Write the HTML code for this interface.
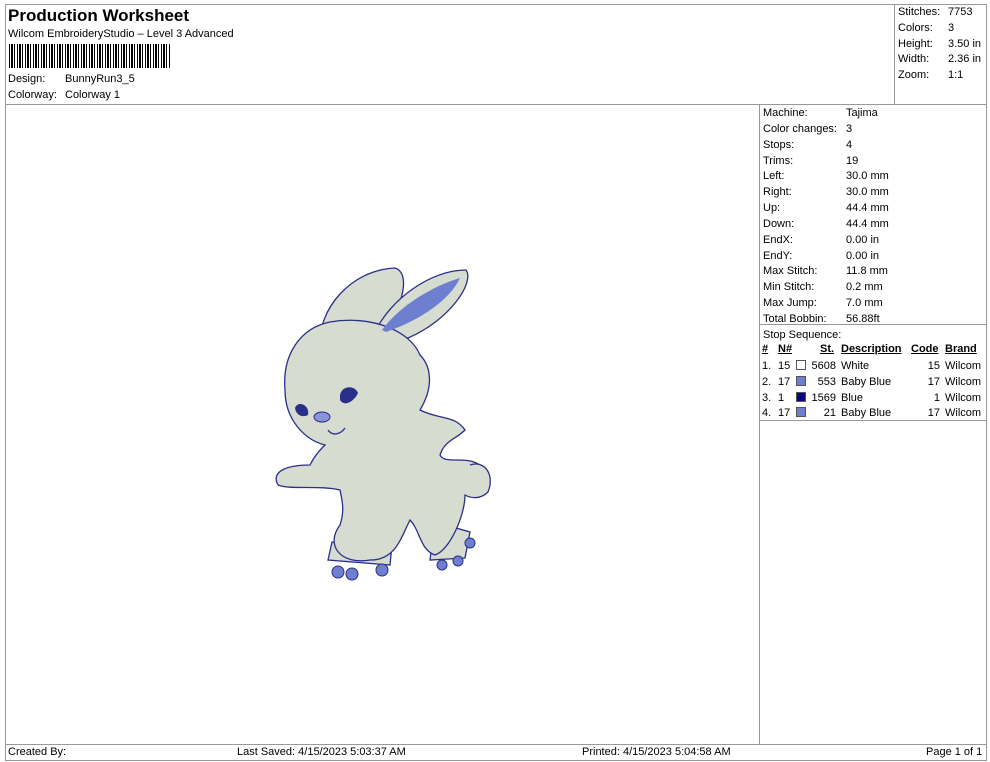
<!DOCTYPE html>
<html><head><meta charset="utf-8"><style>
*{margin:0;padding:0;box-sizing:border-box}
body{width:990px;height:762px;background:#fff;font-family:"Liberation Sans",Arial,sans-serif;font-size:11px;color:#000;position:relative;overflow:hidden}
.a{position:absolute;white-space:nowrap}
.l{position:absolute;background:#999}
u{text-decoration:underline}
.sw{display:inline-block;width:10px;height:10px;border:1px solid #555;vertical-align:-1px}
</style></head><body>
<div class="l" style="left:5px;top:4px;width:982px;height:1px"></div>
<div class="l" style="left:5px;top:760px;width:982px;height:1px"></div>
<div class="l" style="left:5px;top:4px;width:1px;height:757px"></div>
<div class="l" style="left:986px;top:4px;width:1px;height:757px"></div>
<div class="l" style="left:5px;top:104px;width:982px;height:1px"></div>
<div class="l" style="left:894px;top:4px;width:1px;height:100px"></div>
<div class="l" style="left:759px;top:104px;width:1px;height:640px"></div>
<div class="l" style="left:5px;top:744px;width:982px;height:1px"></div>
<div class="l" style="left:759px;top:324px;width:228px;height:1px"></div>
<div class="l" style="left:759px;top:420px;width:228px;height:1px"></div>

<div class="a" style="left:8px;top:6px;font-size:17px;font-weight:bold">Production Worksheet</div>
<div class="a" style="left:8px;top:28px">Wilcom EmbroideryStudio – Level 3 Advanced</div>
<div class="a" style="left:9px;top:44px;width:161px;height:24px;background:repeating-linear-gradient(90deg,#000 0 1px,#fff 1px 2px,#000 2px 4px,#fff 4px 5px,#000 5px 6px,#fff 6px 8px)"></div>
<div class="a" style="left:8px;top:73px">Design:</div><div class="a" style="left:65px;top:73px">BunnyRun3_5</div>
<div class="a" style="left:8px;top:89px">Colorway:</div><div class="a" style="left:65px;top:89px">Colorway 1</div>

<div class="a" style="left:898px;top:5px;line-height:15.8px">Stitches:<br>Colors:<br>Height:<br>Width:<br>Zoom:</div>
<div class="a" style="left:948px;top:5px;line-height:15.8px">7753<br>3<br>3.50 in<br>2.36 in<br>1:1</div>

<div class="a" style="left:763px;top:106px;line-height:15.85px">Machine:<br>Color changes:<br>Stops:<br>Trims:<br>Left:<br>Right:<br>Up:<br>Down:<br>EndX:<br>EndY:<br>Max Stitch:<br>Min Stitch:<br>Max Jump:<br>Total Bobbin:<br>Stop Sequence:</div>
<div class="a" style="left:846px;top:106px;line-height:15.85px">Tajima<br>3<br>4<br>19<br>30.0 mm<br>30.0 mm<br>44.4 mm<br>44.4 mm<br>0.00 in<br>0.00 in<br>11.8 mm<br>0.2 mm<br>7.0 mm<br>56.88ft</div>

<div class="a" style="left:762px;top:343px;font-weight:bold"><u>#</u></div>
<div class="a" style="left:778px;top:343px;font-weight:bold"><u>N#</u></div>
<div class="a" style="left:820px;top:343px;font-weight:bold"><u>St.</u></div>
<div class="a" style="left:841px;top:343px;font-weight:bold"><u>Description</u></div>
<div class="a" style="left:911px;top:343px;font-weight:bold"><u>Code</u></div>
<div class="a" style="left:945px;top:343px;font-weight:bold"><u>Brand</u></div>
<div class="a" style="left:762px;top:359px;line-height:15.8px">1.<br>2.<br>3.<br>4.</div>
<div class="a" style="left:778px;top:359px;line-height:15.8px">15<br>17<br>1<br>17</div>
<div class="a" style="left:796px;top:359px;line-height:15.8px"><span class="sw" style="background:#fff"></span><br><span class="sw" style="background:#6f7fd0"></span><br><span class="sw" style="background:#0a0a80"></span><br><span class="sw" style="background:#6f7fd0"></span></div>
<div class="a" style="left:806px;top:359px;width:30px;text-align:right;line-height:15.8px">5608<br>553<br>1569<br>21</div>
<div class="a" style="left:841px;top:359px;line-height:15.8px">White<br>Baby Blue<br>Blue<br>Baby Blue</div>
<div class="a" style="left:900px;top:359px;width:40px;text-align:right;line-height:15.8px">15<br>17<br>1<br>17</div>
<div class="a" style="left:945px;top:359px;line-height:15.8px">Wilcom<br>Wilcom<br>Wilcom<br>Wilcom</div>

<div class="a" style="left:8px;top:746px">Created By:</div>
<div class="a" style="left:237px;top:746px">Last Saved: 4/15/2023 5:03:37 AM</div>
<div class="a" style="left:582px;top:746px">Printed: 4/15/2023 5:04:58 AM</div>
<div class="a" style="left:926px;top:746px">Page 1 of 1</div>

<svg class="a" style="left:270px;top:260px" width="230" height="330" viewBox="0 0 230 330">
<g fill="#d6dccf" stroke="#2a2f8a" stroke-width="1.3">
<path d="M50 85 C48 50 80 10 125 8 C140 12 135 45 112 72 Z"/>
<path d="M105 72 C120 40 160 10 196 10 C205 22 180 60 138 78 Z"/>
<path d="M62 282 L58 300 L120 305 L122 285 Z"/>
<path d="M165 262 L160 300 L195 298 L200 272 Z"/>
<path d="M60 62 C100 55 140 70 150 95 C160 105 165 125 150 150 C170 160 185 155 195 170 C185 180 175 180 170 195 C175 205 195 195 210 205 C225 215 215 240 195 235 C195 255 180 290 165 295 C150 290 150 270 140 260 C130 280 125 300 100 300 C70 305 55 285 70 265 C75 250 72 240 70 230 C50 225 20 230 8 225 C0 210 20 205 40 205 C45 195 50 190 55 185 C35 180 15 160 15 130 C12 95 30 68 60 62 Z"/>
<path d="M200 205 C215 200 225 215 218 232 C210 240 200 238 195 235" />
</g>
<path d="M112 70 C130 45 165 25 190 18 C180 40 150 60 116 72 Z" fill="#6f7fd0"/>
<path d="M70 135 C72 125 85 125 88 133 C85 140 75 148 70 140 Z" fill="#2a2f8a"/>
<path d="M25 148 C28 140 40 145 38 155 C32 158 26 155 25 148 Z" fill="#2a2f8a"/>
<ellipse cx="52" cy="157" rx="8" ry="5" fill="#8a95d8" stroke="#2a2f8a"/>
<path d="M58 170 C62 176 70 175 75 168" fill="none" stroke="#2a2f8a" stroke-width="1.3"/>
<g fill="#6f7fd0" stroke="#2a2f8a"><circle cx="68" cy="312" r="6"/><circle cx="82" cy="314" r="6"/><circle cx="112" cy="310" r="6"/><circle cx="172" cy="305" r="5"/><circle cx="188" cy="301" r="5"/><circle cx="200" cy="283" r="5"/></g>
</svg>
</body></html>
